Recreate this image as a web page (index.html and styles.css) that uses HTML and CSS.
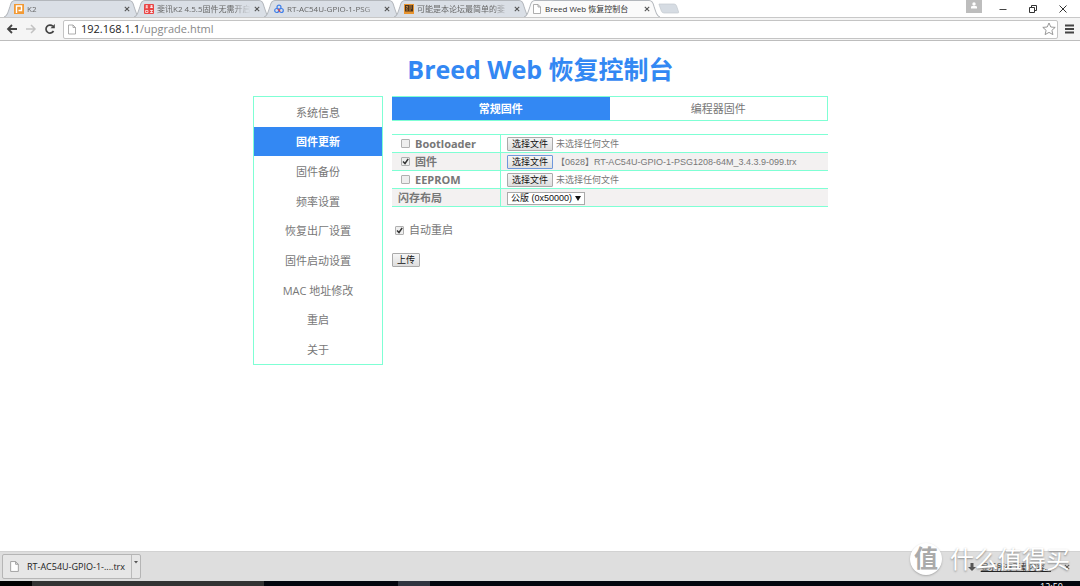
FILE: index.html
```html
<!DOCTYPE html>
<html lang="zh-CN">
<head>
<meta charset="utf-8">
<title>Breed Web 恢复控制台</title>
<link rel="stylesheet" href="styles.css">
</head>
<body>
<svg class="defs" width="0" height="0" aria-hidden="true">
  <symbol id="page" viewBox="0 0 8 10"><path d="M.5.5h4.500L7.500 3v6.500h-7zM5 .5V3h2.500" fill="#fff" stroke="#999" stroke-width=".8"/></symbol>
  <symbol id="close" viewBox="0 0 6 6"><path d="M.8.8l4.400 4.400M5.200.8L.8 5.200" fill="none" stroke="currentColor" stroke-width="1.100"/></symbol>
  <symbol id="shape" viewBox="0 0 136 16" preserveAspectRatio="none"><path d="M0 16C3 15 4 12 6 6C7 2 8 .5 11 .5H125C128 .5 129 2 130 6C132 12 133 15 136 16" stroke="#b3b7bc" stroke-width="1"/></symbol>
</svg>
<header class="browser">
  <div class="strip">
    <nav class="tabs">
      <div class="tab"><svg class="shape"><use href="#shape"/></svg>
        <svg class="fav" viewBox="0 0 10 10"><path d="M0 0h10v10H0z" fill="#f29a35"/><path d="M2.500 9V2h5v4.500h-3" fill="none" stroke="#fff" stroke-width="1.400"/></svg>
        <span class="name">K2</span><button class="x" aria-label="关闭"><svg><use href="#close"/></svg></button></div>
      <div class="tab"><svg class="shape"><use href="#shape"/></svg>
        <svg class="fav" viewBox="0 0 10 10"><rect width="10" height="10" rx="1" fill="#e94646"/><path d="M1.500 2h2.500M1.500 3.800h2.500M2.800 1v3M6 2h3M6 3.500h3M7.500 1v3M1.500 6.500h2.500v2H1.500zM6 6.500h3M6 8.500h3M7.500 6v3" fill="none" stroke="#fff" stroke-width=".7"/></svg>
        <span class="name">斐讯K2 4.5.5固件无需开启</span><button class="x" aria-label="关闭"><svg><use href="#close"/></svg></button></div>
      <div class="tab"><svg class="shape"><use href="#shape"/></svg>
        <svg class="fav" viewBox="0 0 10 10" fill="none" stroke-width="1.200"><circle cx="5" cy="3.200" r="2" stroke="#3f7ee8"/><circle cx="2.700" cy="6.500" r="2" stroke="#3f7ee8"/><circle cx="7.300" cy="6.500" r="2" stroke="#3f7ee8"/><path d="M4 5l2.200 2.600" stroke="#e44"/></svg>
        <span class="name">RT-AC54U-GPIO-1-PSG</span><button class="x" aria-label="关闭"><svg><use href="#close"/></svg></button></div>
      <div class="tab"><svg class="shape"><use href="#shape"/></svg>
        <svg class="fav" viewBox="0 0 10 10"><path d="M0 0h10v10H0z" fill="#e8942f"/><path d="M1 1h8v6.500H1z" fill="#4a3520"/><path d="M2 2.500h2M5 2h3M2 4.500l2-1M5 4h3M3 5v2M6 5v2" stroke="#e8a04a" stroke-width=".7"/></svg>
        <span class="name">可能是本论坛最简单的斐</span><button class="x" aria-label="关闭"><svg><use href="#close"/></svg></button></div>
      <div class="tab active"><svg class="shape"><use href="#shape"/></svg>
        <svg class="fav"><use href="#page"/></svg>
        <span class="name">Breed Web 恢复控制台</span><button class="x" aria-label="关闭"><svg><use href="#close"/></svg></button></div>
      <button class="newtab" aria-label="新标签页"><svg viewBox="0 0 22 10"><path d="M1 .5h15q2 0 2.600 2l2 6q.4 1-1 1H6q-2 0-2.600-2L1 1z" fill="#d6dce3" stroke="#c3c9cf" stroke-width=".7"/></svg></button>
    </nav>
    <div class="window">
      <button class="user" aria-label="用户"><svg viewBox="0 0 16 13"><circle cx="8" cy="4" r="1.700" fill="#fff"/><path d="M5 8.500V7q0-1 1.500-1h3q1.500 0 1.500 1v1.500z" fill="#fff"/></svg></button>
      <button aria-label="最小化"><svg viewBox="0 0 10 10"><path d="M1.500 5.500h7" stroke="#444"/></svg></button>
      <button aria-label="还原"><svg viewBox="0 0 10 10"><path d="M1.500 3.500h5v5h-5zM3.500 3V1.500h5v5H7" fill="none" stroke="#333"/></svg></button>
      <button aria-label="关闭窗口"><svg viewBox="0 0 10 10"><path d="M1.500 1.500l7 7M8.500 1.500l-7 7" stroke="#333"/></svg></button>
    </div>
  </div>
  <div class="toolbar">
    <button aria-label="后退"><svg viewBox="0 0 12 12"><path d="M6 2L2 6l4 4M2 6h9" fill="none" stroke="#444" stroke-width="1.800"/></svg></button>
    <button aria-label="前进"><svg viewBox="0 0 12 12"><path d="M6 2l4 4-4 4M10 6H1" fill="none" stroke="#c2c2c2" stroke-width="1.500"/></svg></button>
    <button aria-label="刷新"><svg viewBox="0 0 12 12"><path d="M9.500 8A4 4 0 1 1 8.800 3.200" fill="none" stroke="#444" stroke-width="1.700"/><path d="M10.800 1v4.200H6.500z" fill="#444"/></svg></button>
    <div class="address">
      <svg class="doc"><use href="#page"/></svg>
      <a class="url" href="#"><b>192.168.1.1</b>/upgrade.html</a>
      <button aria-label="收藏"><svg viewBox="0 0 14 14"><path d="M7 1l1.800 4 4.400.4-3.300 2.900 1 4.300L7 10.400l-3.900 2.200 1-4.300L.8 5.400 5.200 5z" fill="#fff" stroke="#8c8c8c" stroke-width=".9"/></svg></button>
    </div>
    <button class="menu" aria-label="菜单"><svg viewBox="0 0 10 10"><path d="M0 1.500h9M0 5h9M0 8.500h9" stroke="#444" stroke-width="1.800"/></svg></button>
  </div>
</header>

<main class="page">
  <h1>Breed Web 恢复控制台</h1>
  <div class="columns">
    <nav class="side">
      <a href="#">系统信息</a>
      <a href="#" class="on">固件更新</a>
      <a href="#">固件备份</a>
      <a href="#">频率设置</a>
      <a href="#">恢复出厂设置</a>
      <a href="#">固件启动设置</a>
      <a href="#">MAC 地址修改</a>
      <a href="#">重启</a>
      <a href="#">关于</a>
    </nav>
    <form class="content">
      <div class="modes"><a href="#" class="on">常规固件</a><a href="#">编程器固件</a></div>
      <table class="grid">
        <tr><th><label><input type="checkbox">Bootloader</label></th><td><div class="pick"><button type="button">选择文件</button><span>未选择任何文件</span></div></td></tr>
        <tr><th><label><input type="checkbox" checked>固件</label></th><td><div class="pick"><button type="button" class="focus">选择文件</button><span>【0628】RT-AC54U-GPIO-1-PSG1208-64M_3.4.3.9-099.trx</span></div></td></tr>
        <tr><th><label><input type="checkbox">EEPROM</label></th><td><div class="pick"><button type="button">选择文件</button><span>未选择任何文件</span></div></td></tr>
        <tr><th><label for="layout">闪存布局</label></th><td><div class="pick"><div class="select"><select id="layout"><option>公版 (0x50000)</option></select></div></div></td></tr>
      </table>
      <label class="auto"><input type="checkbox" checked>自动重启</label>
      <button type="button" class="upload">上传</button>
    </form>
  </div>
</main>

<footer class="shelf">
  <div class="item"><button class="file"><svg><use href="#page"/></svg>RT-AC54U-GPIO-1-....trx</button><button class="more" aria-label="更多"><svg viewBox="0 0 4 3"><path d="M0 0h4L2 2.500z" fill="#555"/></svg></button></div>
  <div class="all"><svg viewBox="0 0 8 10"><path d="M2.500 1h3v4H8L4 9 0 5h2.500z" fill="#555"/></svg><a href="#">显示所有下载内容...</a><button class="x" aria-label="关闭"><svg><use href="#close"/></svg></button></div>
</footer>
<div class="taskbar"><i class="start"></i><i class="search"></i><i class="gap"></i><i class="app"></i><span class="clock">12:50</span></div>
<div class="mark"><span class="seal">值</span><span>什么值得买</span></div>
</body>
</html>
```
FILE: styles.css
```css
* { box-sizing: border-box; }
body {
  margin: 0;
  height: 100vh;
  display: flex;
  flex-direction: column;
  overflow: hidden;
  position: relative;
  background: #fff;
  color: #777;
  font: 11px/16px "Open Sans", "Noto Sans CJK SC", sans-serif;
}
a { color: inherit; text-decoration: none; }
button { font: inherit; color: inherit; padding: 0; border: 0; background: none; }
svg { display: block; flex: none; }
.defs { position: absolute; }

/* browser frame */
.strip { display: flex; justify-content: space-between; height: 17px; }
.tabs { display: flex; padding-left: 4px; }
.tab {
  position: relative;
  display: flex;
  align-items: center;
  gap: 3px;
  width: 136px;
  height: 17px;
  margin-right: -6px;
  padding: 0 10px;
  font-size: 8px;
  color: #666;
}
.shape { position: absolute; left: 0; top: 0; width: 100%; height: 100%; fill: #dadfe6; }
.tab.active { z-index: 1; color: #333; padding-left: 8px; }
.tab.active .shape { fill: #fafafa; }
.fav { position: relative; width: 10px; height: 10px; }
.name { position: relative; flex: 1; overflow: hidden; white-space: nowrap; }
.tab:not(.active) .name { mask-image: linear-gradient(to right, #000 80%, transparent); }
.x { position: relative; }
.x svg { width: 6px; height: 6px; color: #555; }
.newtab { margin-left: 4px; align-self: center; }
.newtab svg { width: 22px; height: 11px; }
.window { display: flex; gap: 20px; padding-right: 12px; }
.window svg { width: 10px; height: 10px; }
.window .user { background: #bdbdbd; height: 13px; margin-right: -4px; }
.window .user svg { width: 16px; height: 13px; }
.toolbar {
  display: flex;
  align-items: center;
  gap: 7px;
  height: 24px;
  padding: 0 5px 0 6px;
  background: #f5f5f5;
  border-top: 1px solid #c8c8c8;
  border-bottom: 1px solid #bdbdbd;
}
.toolbar > button svg { width: 12px; height: 12px; }
.toolbar .menu svg { width: 10px; height: 10px; }
.address {
  flex: 1;
  display: flex;
  align-items: center;
  gap: 5px;
  height: 19px;
  padding: 0 1px 0 4px;
  background: #fff;
  border: 1px solid #c4c4c4;
  border-radius: 2px;
}
.address .doc { width: 8px; height: 11px; }
.address button svg { width: 14px; height: 14px; }
.url { flex: 1; font-size: 11px; color: #888; }
.url b { font-weight: normal; color: #222; }

/* console page */
.page { flex: 1; width: 100%; max-width: 576px; margin: 0 auto; padding-left: 1px; min-height: 0; }
h1 { margin: 0; padding: 10px 0 9px; font-size: 25px; line-height: 36px; text-align: center; color: #3388f3; }
.columns { display: flex; align-items: flex-start; gap: 9px; }
.side {
  width: 130px;
  min-height: 269px;
  display: grid;
  grid-auto-rows: 1fr;
  border: 1px solid #7fffd4;
}
.side a { display: flex; align-items: center; justify-content: center; padding-top: 2px; }
.on { background: #3388f3; color: #fff; font-weight: bold; }
.content { flex: 1; display: flex; flex-direction: column; align-items: flex-start; }
.modes { display: flex; width: 100%; border: 1px solid #7fffd4; border-left: 0; }
.modes a { flex: 1; text-align: center; line-height: 23px; }
.grid { width: 100%; margin-top: 13px; border-spacing: 0; border-top: 1px solid #7fffd4; }
.grid tr:nth-child(even) { background: #f3f1f1; }
th, td { padding: 0 6px; border-bottom: 1px solid #7fffd4; }
th { width: 109px; text-align: left; border-right: 1px solid #7fffd4; font-size: 11px; }
th label, .auto { display: flex; align-items: center; line-height: 16px; }
input[type="checkbox"] {
  appearance: none;
  width: 9px;
  height: 9px;
  margin: 0 5px 0 3px;
  border: 1px solid #b0b0b0;
  border-radius: 1px;
  background: #eee;
}
input[type="checkbox"]:checked {
  background: #eee url("data:image/svg+xml,%3Csvg xmlns='http://www.w3.org/2000/svg' viewBox='0 0 7 7'%3E%3Cpath d='M1 3.500l2 2L6.200.8' fill='none' stroke='%23333' stroke-width='1.500'/%3E%3C/svg%3E") center / 7px 7px;
}
.pick { display: flex; align-items: center; gap: 3px; height: 17px; padding-top: 1px; font: 9px/14px "Liberation Sans", "Noto Sans CJK SC", sans-serif; white-space: nowrap; }
.pick button, .upload {
  height: 14px;
  padding: 0 4px;
  border: 1px solid #aaa;
  border-radius: 1px;
  background: linear-gradient(#f6f6f6, #dedede);
  color: #111;
  font: 9px/12px "Liberation Sans", "Noto Sans CJK SC", sans-serif;
}
.pick .focus { border-color: #6f97dc; }
.select { position: relative; }
.select::after {
  content: "";
  position: absolute;
  right: 4px;
  top: 4px;
  border: 3px solid transparent;
  border-top: 5px solid #111;
  border-bottom: 0;
  pointer-events: none;
}
select {
  display: block;
  appearance: none;
  width: 78px;
  height: 13px;
  padding: 0 3px;
  border: 1px solid #aaa;
  border-radius: 0;
  background: #fff;
  color: #111;
  font: 9px/11px "Liberation Sans", "Noto Sans CJK SC", sans-serif;
}
.auto { margin-top: 15px; }
.upload { margin-top: 15px; }

/* download shelf and taskbar */
.shelf {
  display: flex;
  justify-content: space-between;
  align-items: center;
  height: 30px;
  padding: 0 10px 0 2px;
  background: #dedede;
  border-top: 1px solid #d2d2d2;
  font-size: 8px;
  color: #222;
}
.item { display: flex; height: 25px; border: 1px solid #b5b5b5; border-radius: 2px; background: #e6e6e6; font-size: 9px; }
.file { display: flex; align-items: center; gap: 8px; padding: 0 6px 0 7px; }
.file svg { width: 9px; height: 11px; }
.more { padding: 0 2px 8px; border-left: 1px solid #bbb; }
.more svg { width: 4px; height: 3px; }
.all { display: flex; align-items: center; gap: 5px; }
.all > svg { width: 8px; height: 10px; }
.all a { text-decoration: underline; margin-right: 8px; }
.taskbar { display: flex; height: 5px; overflow: hidden; background: #04060e; }
.start { width: 32px; background: #000; }
.search { width: 232px; background: #333; }
.gap { width: 134px; }
.app { width: 32px; background: #30343f; }
.clock { margin-left: auto; padding-right: 17px; font-size: 9px; line-height: 12px; color: #fff; }
.mark {
  position: absolute;
  right: 10px;
  bottom: 10px;
  display: flex;
  align-items: center;
  gap: 8px;
  color: #fff;
  font-size: 24px;
  line-height: 34px;
  text-shadow: 0 1px 2px #888;
  pointer-events: none;
}
.seal { width: 32px; height: 32px; border-radius: 50%; background: #fff; color: #aaa; font-weight: bold; line-height: 30px; text-align: center; text-shadow: none; box-shadow: 0 1px 2px #aaa; }
```
